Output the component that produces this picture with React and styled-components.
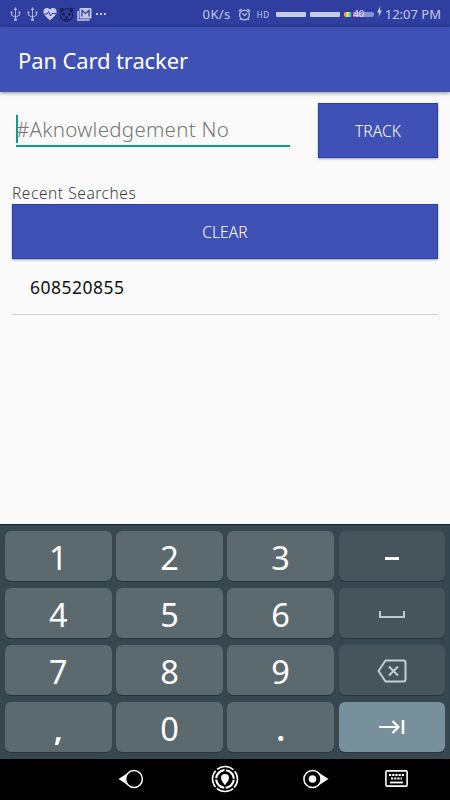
import styled, { createGlobalStyle } from "styled-components";

const keys = ["1", "2", "3", "minus", "4", "5", "6", "space", "7", "8", "9", "delete", ",", "0", ".", "next"];

function App() {
    return (
        <>
            <GlobalStyle />
            <Phone>
                <StatusBar />
                <AppBar>
                    <Title>Pan Card tracker</Title>
                </AppBar>
                <Content>
                    <SearchRow>
                        <Field>
                            <Caret />
                            <Hint>#Aknowledgement No</Hint>
                        </Field>
                        <Button $width="120px">
                            <ButtonText>TRACK</ButtonText>
                        </Button>
                    </SearchRow>
                    <Label>Recent Searches</Label>
                    <Button $width="100%">
                        <ButtonText>CLEAR</ButtonText>
                    </Button>
                    <HistoryItem>608520855</HistoryItem>
                </Content>
                <Keyboard>
                    {keys.map((key) => (
                        <Key key={key} $kind={key}>
                            <KeyFace name={key} />
                        </Key>
                    ))}
                </Keyboard>
                <NavBar />
            </Phone>
        </>
    );
}

function StatusBar() {
    return (
        <StatusBarDiv>
            <StatusGroup>
                <UsbIcon />
                <UsbIcon />
                <HeartIcon />
                <PandaIcon />
                <MailIcon />
                <svg width="14" height="14" viewBox="0 0 14 14" fill="#c3c8ea">
                    <path d="M2 6h2v2H2zM6 6h2v2H6zM10 6h2v2h-2z" />
                </svg>
            </StatusGroup>
            <StatusGroup>
                <Speed>0K/s</Speed>
                <AlarmIcon />
                <Hd>HD</Hd>
                <Signal />
                <Signal />
                <Battery>
                    <BatteryText>40</BatteryText>
                </Battery>
                <BoltSvg width="5" height="12" viewBox="0 0 5 12" fill="#c3c8ea">
                    <path d="M3.4 0 0 6.5h2L1.4 11 5 4.5H3z" />
                </BoltSvg>
                <Clock>12:07 PM</Clock>
            </StatusGroup>
        </StatusBarDiv>
    );
}

function UsbIcon() {
    return (
        <UsbSvg width="11" height="14" viewBox="0 0 11 14" fill="none" stroke="#aeb7e2" strokeWidth="1">
            <path d="M5.5 2v10M1.5 6v2.2l4 2M9.5 5.5v2.7l-4 2" />
            <path d="M5.5 0 7.2 3H3.8zM.5 4.5h2v2h-2zM8.5 4.5h2v2h-2z" fill="#aeb7e2" stroke="none" />
            <circle cx="5.5" cy="12.4" r="1.5" fill="#aeb7e2" stroke="none" />
        </UsbSvg>
    );
}

function HeartIcon() {
    return (
        <svg width="14" height="14" viewBox="0 0 14 14">
            <path
                d="M7 13.4C3 10 .4 7.7.4 4.6.4 2.5 2 1 3.9 1 5.2 1 6.3 1.6 7 2.6 7.7 1.6 8.8 1 10.1 1c1.900 0 3.500 1.500 3.500 3.600C13.600 7.700 11 10 7 13.400z"
                fill="#c9cdeb"
            />
            <path d="M1 7h3l1.500-2.500L7.500 9 9 6.500h4" fill="none" stroke="#303f9f" strokeWidth="1" />
        </svg>
    );
}

function PandaIcon() {
    return (
        <svg width="15" height="15" viewBox="0 0 15 15">
            <g fill="none" stroke="#181d4c" strokeWidth="1.1">
                <circle cx="7.5" cy="8" r="6.2" />
                <circle cx="2.7" cy="2.8" r="1.4" />
                <circle cx="12.3" cy="2.8" r="1.4" />
                <path d="M5 12q2.500 1.800 5 0M7.500 10v2" />
            </g>
            <g fill="#181d4c">
                <ellipse cx="4.6" cy="7.2" rx="1.4" ry="1.6" />
                <ellipse cx="10.4" cy="7.2" rx="1.4" ry="1.6" />
                <ellipse cx="7.5" cy="9.8" rx="1.4" ry="0.9" />
            </g>
        </svg>
    );
}

function MailIcon() {
    return (
        <MailSvg width="15" height="13" viewBox="0 0 15 13">
            <path d="M1 3v9h11.500" fill="none" stroke="#c3c8ea" strokeWidth="1.5" />
            <rect x="2.5" y="0" width="12" height="10.5" rx="1" fill="#c3c8ea" />
            <path d="M5 8.500V2.500l3.500 3 3.500-3v6" fill="none" stroke="#303f9f" strokeWidth="1.3" />
        </MailSvg>
    );
}

function AlarmIcon() {
    return (
        <AlarmSvg width="13" height="13" viewBox="0 0 13 13" fill="none" stroke="#b9c0e6" strokeWidth="1.2">
            <circle cx="6.5" cy="7" r="4.9" />
            <path d="M.7 3.300 3.500 1M12.300 3.300 9.500 1M4.300 5.500l2.200 2 2.500-2M3 10.500 1.800 12M10 10.500l1.200 1.500" />
        </AlarmSvg>
    );
}

function KeyFace({ name }) {
    if (name === "minus") {
        return <Minus />;
    }
    if (name === "space") {
        return (
            <SpaceSvg width="26" height="8" viewBox="0 0 26 8" fill="none" stroke="#c3c7c9" strokeWidth="2">
                <path d="M1 0v6h24V0" />
            </SpaceSvg>
        );
    }
    if (name === "delete") {
        return (
            <DeleteSvg width="30" height="24" viewBox="0 0 30 24" fill="none" stroke="#c8cdcf" strokeWidth="2">
                <path d="M8.500 1.500h18q2 0 2 2v17q0 2-2 2h-18L1.500 12z" strokeLinejoin="round" />
                <path d="m12 7.500 9 9M21 7.500l-9 9" />
            </DeleteSvg>
        );
    }
    if (name === "next") {
        return (
            <svg width="26" height="14" viewBox="0 0 26 14" fill="none" stroke="#fff" strokeWidth="2.2">
                <path d="M0 7h20M13.500 1l6 6-6 6" />
                <path d="M24 0v14" strokeWidth="2.5" />
            </svg>
        );
    }
    return <Digit $mark={name === "," || name === "."}>{name}</Digit>;
}

function NavBar() {
    return (
        <NavBarDiv>
            <NavIcon $gap="67px">
                <svg width="26" height="20" viewBox="0 0 26 20">
                    <path d="M.5 10 12 2.500v15z" fill="#fff" />
                    <circle cx="16" cy="10" r="8.4" fill="#000" stroke="#fff" strokeWidth="1.5" />
                </svg>
            </NavIcon>
            <NavIcon $gap="64px">
                <svg width="28" height="28" viewBox="0 0 28 28" fill="none" stroke="#fff">
                    <circle
                        cx="14"
                        cy="14"
                        r="12.5"
                        strokeWidth="1.6"
                        strokeDasharray="17.600 2.030"
                        strokeDashoffset="-1"
                        transform="rotate(45 14 14)"
                    />
                    <circle cx="14" cy="14" r="8.8" strokeWidth="2.2" strokeDasharray="12.320 1.500" strokeDashoffset="-.75" />
                    <path d="M14 20.500c-1-2.500-4-4.500-4-7.500a4 4 0 0 1 8 0c0 3-3 5-4 7.500z" fill="#fff" stroke="none" />
                </svg>
            </NavIcon>
            <NavIcon $gap="56px">
                <svg width="26" height="20" viewBox="0 0 26 20">
                    <path d="M25.500 10 14 2.500v15z" fill="#fff" />
                    <circle cx="9.5" cy="10" r="8.6" fill="#000" stroke="#fff" strokeWidth="1.5" />
                    <circle cx="9.5" cy="10" r="3.8" fill="#fff" />
                </svg>
            </NavIcon>
            <NavIcon $gap="0">
                <svg width="23" height="17" viewBox="0 0 23 17">
                    <rect x=".9" y=".9" width="21.2" height="15.2" rx="1.2" fill="none" stroke="#fff" strokeWidth="1.6" />
                    <path d="M4 5h15M6 8.500h11" stroke="#fff" strokeWidth="2" strokeDasharray="2.200 1" />
                    <path d="M5 12.500h13" stroke="#fff" strokeWidth="1.8" />
                </svg>
            </NavIcon>
        </NavBarDiv>
    );
}

const GlobalStyle = createGlobalStyle`
    * {
        box-sizing: border-box;
    }

    body {
        margin: 0;
        background-color: #fafafa;
        font-family: "Noto Sans", "Open Sans", sans-serif;
    }

    svg {
        display: block;
        flex-shrink: 0;
    }
`;

const Phone = styled.div`
    display: flex;
    flex-direction: column;
    width: 450px;
    height: 800px;
    overflow: hidden;
    background-color: #fafafa;
`;

const StatusBarDiv = styled.div`
    display: flex;
    justify-content: space-between;
    height: 27px;
    padding: 0 9px 0 10px;
    background-color: #303f9f;
    color: #c3c8ea;
`;

const StatusGroup = styled.div`
    display: flex;
    align-items: center;
    height: 28px;
    gap: 2px;
`;

const UsbSvg = styled.svg`
    margin-right: 4px;

    & + & {
        margin-right: 3px;
    }
`;

const MailSvg = styled.svg`
    margin-left: 1px;
`;

const AlarmSvg = styled.svg`
    margin: 0 4px 0 5px;
`;

const BoltSvg = styled.svg`
    margin: -4px 1px 0 1px;
`;

const Speed = styled.span`
    font-size: 13px;
    letter-spacing: 0.4px;
    white-space: nowrap;
`;

const Hd = styled.span`
    width: 14px;
    margin-right: 3px;
    font-size: 8px;
    letter-spacing: 0.6px;
`;

const Signal = styled.div`
    width: 30px;
    height: 5px;
    margin-right: 2px;
    border-radius: 1px;
    background-color: #c8ccea;
`;

const Battery = styled.div`
    display: flex;
    align-items: center;
    justify-content: center;
    width: 30px;
    height: 5px;
    border-radius: 2px;
    background: linear-gradient(90deg, #ff9d45 0 2px, #d8ef65 3px 4px, #31dfc0 6px, #303f9f 8px 9px, #e552b5 9px 11px, #8792ce 13px);
`;

const BatteryText = styled.span`
    font-size: 9.5px;
    line-height: 10px;
    color: #e5e6f5;
`;

const Clock = styled.span`
    font-size: 13px;
    white-space: nowrap;
`;

const AppBar = styled.header`
    height: 64.5px;
    padding: 0 18px;
    background-color: #3f51b5;
    box-shadow: 0 1px 4px rgba(0, 0, 0, 0.45);
`;

const Title = styled.h1`
    margin: 0;
    font-size: 22px;
    font-weight: 450;
    line-height: 66px;
    letter-spacing: -0.12px;
    color: white;
    white-space: nowrap;
`;

const Content = styled.main`
    display: flex;
    flex-direction: column;
    flex: 1;
    padding: 11.5px 12px 0;
`;

const SearchRow = styled.div`
    display: flex;
    justify-content: space-between;
    height: 55px;
`;

const Field = styled.div`
    display: flex;
    width: 273.5px;
    height: 44px;
    margin-left: 4px;
    border-bottom: 2px solid #14998a;
`;

const Caret = styled.div`
    width: 2px;
    height: 28px;
    margin-top: 12px;
    background-color: #14998a;
`;

const Hint = styled.span`
    margin-left: -2px;
    font-size: 20.5px;
    font-weight: 300;
    line-height: 53px;
    letter-spacing: 0.29px;
    color: #777;
    white-space: nowrap;
`;

const Button = styled.button`
    display: flex;
    align-items: center;
    justify-content: center;
    flex-shrink: 0;
    width: ${(props) => props.$width};
    height: 55px;
    padding: 0;
    border: 1px solid #2440b4;
    background-color: #3f51b5;
    box-shadow: 0 1px 2px rgba(0, 0, 0, 0.35);
    color: white;
    font-family: inherit;
`;

const ButtonText = styled.span`
    font-size: 15.5px;
    font-weight: 350;
    letter-spacing: 0.1px;
`;

const Label = styled.div`
    height: 46px;
    padding-top: 25px;
    font-size: 15.5px;
    font-weight: 300;
    line-height: 21px;
    letter-spacing: 0.56px;
    color: #3e3e3e;
`;

const HistoryItem = styled.div`
    height: 56px;
    padding-left: 18px;
    border-bottom: 1px solid #d0d0d0;
    font-size: 17.5px;
    line-height: 57px;
    letter-spacing: 0.5px;
    color: #111;
`;

const Keyboard = styled.div`
    display: grid;
    grid-template-columns: repeat(4, 106.5px);
    grid-auto-rows: 50px;
    gap: 7px 4.7px;
    height: 235px;
    padding: 6px 5px 0;
    border-top: 1px solid #10212a;
    background-color: #37474f;
`;

const Key = styled.div`
    display: flex;
    align-items: center;
    justify-content: center;
    border-radius: 6px;
    background-color: ${(props) =>
        props.$kind === "next" ? "#78909c" : ["minus", "space", "delete"].includes(props.$kind) ? "#46555c" : "#5c696f"};
    box-shadow: 0 1px 0 #26343b;
`;

const Digit = styled.span`
    padding-top: ${(props) => (props.$mark ? 4 : 3)}px;
    font-size: 32.5px;
    font-weight: ${(props) => (props.$mark ? 600 : 400)};
    line-height: 50px;
    color: white;
`;

const Minus = styled.div`
    width: 14px;
    height: 3px;
    margin-top: 5px;
    background-color: white;
`;

const SpaceSvg = styled.svg`
    margin-top: 4px;
`;

const DeleteSvg = styled.svg`
    margin-top: 2px;
`;

const NavBarDiv = styled.nav`
    display: flex;
    align-items: center;
    height: 41px;
    padding: 0 0 2px 118px;
    background-color: black;
`;

const NavIcon = styled.div`
    margin-right: ${(props) => props.$gap};
`;

export default App;
